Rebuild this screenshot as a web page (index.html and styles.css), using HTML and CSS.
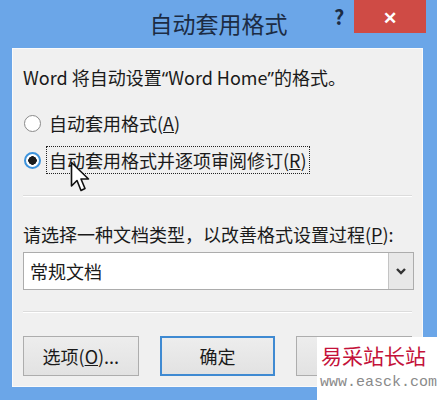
FILE: index.html
```html
<!DOCTYPE html>
<html lang="zh-CN">
<head>
<meta charset="UTF-8">
<meta name="viewport" content="width=device-width, initial-scale=1.0">
<title>自动套用格式</title>
<link rel="stylesheet" href="styles.css">
</head>
<body>
<div id="dialog">
  <div class="titlebar">
    <span class="title">自动套用格式</span>
    <span class="help">?</span>
    <span class="close">&#x2715;</span>
  </div>

  <div class="client">
    <p class="intro">Word 将自动设置<span class="q">“</span>Word Home<span class="q">”</span>的格式。</p>

    <div class="options">
      <label class="option">
        <span class="radio"></span>
        <span class="label-text">自动套用格式(<u>A</u>)</span>
      </label>
      <label class="option">
        <span class="radio checked"></span>
        <span class="label-text focused">自动套用格式并逐项审阅修订(<u>R</u>)</span>
      </label>
    </div>

    <hr class="sep">

    <p class="prompt">请选择一种文档类型，以改善格式设置过程(<u>P</u>):</p>
    <div class="combo">
      <span class="combo-value">常规文档</span>
      <span class="combo-arrow">
        <svg width="12" height="8" viewBox="0 0 12 8"><path d="M2 2 L6 6 L10 2" fill="none" stroke="#333" stroke-width="2.4"/></svg>
      </span>
    </div>

    <hr class="sep lower">

    <div class="buttons">
      <button>选项(<u>O</u>)...</button>
      <button class="default">确定</button>
      <button aria-label="取消"></button>
    </div>
  </div>

  <!-- mouse pointer over the second option -->
  <svg class="cursor" width="20" height="32" viewBox="0 0 20 32">
    <path d="M1.5 1.5 L1.5 25 L7 19.5 L11 29.5 L15 27.5 L11 18 L18.5 18 Z" fill="#fff" stroke="#111" stroke-width="1.6" stroke-linejoin="round"/>
  </svg>

  <div class="watermark">
    <div class="wm-name">易采站长站</div>
    <div class="wm-url">www.easck.com</div>
  </div>
</div>
</body>
</html>
```

FILE: styles.css
```css
body {
  margin: 0;
  padding: 0;
  background-color: #6ba6e8;
  font-family: "Noto Sans CJK SC", "Noto Sans", sans-serif;
  color: #1a1a1a;
}

#dialog {
  position: relative;
  width: 437px;
  height: 400px;
  overflow: hidden;
  background-color: #6ba6e8;
  box-sizing: border-box;
  padding: 0 14px 13px 12px;
  display: flex;
  flex-direction: column;
}

.titlebar {
  height: 48px;
  flex: none;
  display: flex;
  align-items: center;
  justify-content: center;
  position: relative;
}

.title {
  font-size: 23px;
  color: #1c2c44;
  margin-top: -2px;
  margin-left: 2px;
}

.help {
  position: absolute;
  left: 322px;
  top: 2px;
  font-size: 20px;
  font-weight: bold;
  color: #1c2c44;
}

.close {
  position: absolute;
  left: 342px;
  top: 0;
  width: 72px;
  height: 33px;
  background-color: #cf4b45;
  color: #fff;
  font-size: 17px;
  font-weight: bold;
  display: flex;
  align-items: center;
  justify-content: center;
}

.client {
  flex: 1;
  background-color: #f0f0f0;
  border: 1px solid #fafafa;
  padding: 0 10px 0 10px;
}

.intro {
  font-size: 18px;
  margin: 15px 0 0 0;
  line-height: 26px;
}

.q {
  font-family: "Noto Sans", sans-serif;
}

.options {
  margin-top: 19px;
  display: flex;
  flex-direction: column;
  gap: 11px;
}

.option {
  display: flex;
  align-items: center;
  font-size: 18px;
  height: 26px;
}

.radio {
  width: 15px;
  height: 15px;
  border: 1px solid #8a8a8a;
  border-radius: 50%;
  background: #fff;
  margin-left: 1px;
  margin-right: 5px;
  box-sizing: content-box;
  position: relative;
}

.radio.checked {
  border: 2px solid #3d93dc;
  width: 13px;
  height: 13px;
  background: radial-gradient(circle, #1c1c1c 0 4px, #fff 4.5px);
}

.label-text {
  padding: 0 2px;
  line-height: 26px;
  border: 1px dotted transparent;
}

.label-text.focused {
  border-color: #222;
}

.sep {
  border: none;
  border-top: 1px solid #dcdcdc;
  border-bottom: 1px solid #fff;
  margin: 22px 0 0 0;
}

.prompt {
  font-size: 18px;
  margin: 24px 0 0 0;
  line-height: 26px;
}

.combo {
  margin-top: 5px;
  height: 38px;
  width: 391px;
  box-sizing: border-box;
  border: 1px solid #acacac;
  background: #fff;
  display: flex;
  align-items: center;
}

.combo-value {
  flex: 1;
  font-size: 18px;
  padding-left: 6px;
}

.combo-arrow {
  width: 24px;
  height: 36px;
  background: #e8e8e8;
  border-left: 1px solid #c4c4c4;
  display: flex;
  align-items: center;
  justify-content: center;
}

.sep.lower {
  margin-top: 21px;
}

.buttons {
  margin-top: 23px;
  display: flex;
  gap: 21px;
}

button {
  width: 118px;
  height: 40px;
  font-family: "Noto Sans CJK SC", "Noto Sans", sans-serif;
  font-size: 18px;
  color: #1a1a1a;
  background: linear-gradient(#ededed, #e2e2e2);
  border: 1px solid #adadad;
  padding: 0;
}

button.default {
  border: 2px solid #3f8ad2;
}

.cursor {
  position: absolute;
  left: 70px;
  top: 161px;
}

.watermark {
  position: absolute;
  left: 317px;
  top: 337px;
  width: 120px;
  height: 63px;
  background: #fff;
  padding: 4px 0 0 4px;
  box-sizing: border-box;
}

.wm-name {
  font-size: 21px;
  line-height: 28px;
  color: #c4123a;
  white-space: nowrap;
}

.wm-url {
  font-family: "Liberation Mono", monospace;
  font-size: 15px;
  line-height: 18px;
  color: #8a8a8a;
  margin-top: 5px;
  margin-left: -1px;
  white-space: nowrap;
}
```
